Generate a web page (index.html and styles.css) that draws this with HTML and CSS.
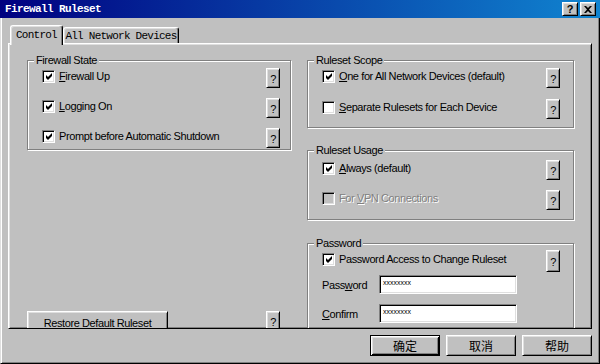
FILE: index.html
```html
<!DOCTYPE html>
<html>
<head>
  <meta charset="UTF-8">
  <link rel="stylesheet" href="styles.css">
</head>
<body>
  <div class="window">
    <div class="titlebar">
      <span class="title">Firewall Ruleset</span>
      <div class="caption-btns">
        <button class="cap-btn">?</button>
        <button class="cap-btn">
          <svg width="8" height="7" viewBox="0 0 8 7"><path d="M0 0h2l2 2 2-2h2L5 3.5 8 7H6L4 5 2 7H0l3-3.5z" fill="#000"/></svg>
        </button>
      </div>
    </div>

    <div class="client">
      <div class="tabs">
        <div class="tab active">Control</div>
        <div class="tab">All Network Devices</div>
      </div>

      <div class="panel">
        <div class="col col-left">
          <div class="group g-state">
            <div class="group-title">Firewall State</div>
            <div class="rows">
              <div class="row">
                <label class="check"><span class="cb"><svg viewBox="0 0 7 7"><path d="M0 2L2 4L6 0L6 3L2 7L0 5Z"/></svg></span><span><u>F</u>irewall Up</span></label>
                <button class="help">?</button>
              </div>
              <div class="row">
                <label class="check"><span class="cb"><svg viewBox="0 0 7 7"><path d="M0 2L2 4L6 0L6 3L2 7L0 5Z"/></svg></span><span><u>L</u>ogging On</span></label>
                <button class="help">?</button>
              </div>
              <div class="row">
                <label class="check"><span class="cb"><svg viewBox="0 0 7 7"><path d="M0 2L2 4L6 0L6 3L2 7L0 5Z"/></svg></span><span>Prompt before Automatic Shutdown</span></label>
                <button class="help">?</button>
              </div>
            </div>
          </div>

          <div class="restore-row">
            <button class="btn restore">Restore Default Ruleset</button>
            <button class="help">?</button>
          </div>
        </div>

        <div class="col col-right">
          <div class="group g-scope">
            <div class="group-title">Ruleset Scope</div>
            <div class="rows">
              <div class="row">
                <label class="check"><span class="cb"><svg viewBox="0 0 7 7"><path d="M0 2L2 4L6 0L6 3L2 7L0 5Z"/></svg></span><span><u>O</u>ne for All Network Devices (default)</span></label>
                <button class="help">?</button>
              </div>
              <div class="row">
                <label class="check"><span class="cb"></span><span><u>S</u>eparate Rulesets for Each Device</span></label>
                <button class="help">?</button>
              </div>
            </div>
          </div>

          <div class="group g-usage">
            <div class="group-title">Ruleset Usage</div>
            <div class="rows">
              <div class="row">
                <label class="check"><span class="cb"><svg viewBox="0 0 7 7"><path d="M0 2L2 4L6 0L6 3L2 7L0 5Z"/></svg></span><span><u>A</u>lways (default)</span></label>
                <button class="help">?</button>
              </div>
              <div class="row">
                <label class="check disabled"><span class="cb"></span><span>For <u>V</u>PN Connections</span></label>
                <button class="help">?</button>
              </div>
            </div>
          </div>

          <div class="group g-password">
            <div class="group-title">Password</div>
            <div class="row pw-row">
              <label class="check"><span class="cb"><svg viewBox="0 0 7 7"><path d="M0 2L2 4L6 0L6 3L2 7L0 5Z"/></svg></span><span>Password Access to Change Ruleset</span></label>
              <button class="help tall">?</button>
            </div>
            <div class="field first">
              <span class="field-label">Pass<u>w</u>ord</span>
              <span class="text-input">xxxxxxxx</span>
            </div>
            <div class="field">
              <span class="field-label"><u>C</u>onfirm</span>
              <span class="text-input">xxxxxxxx</span>
            </div>
          </div>
        </div>
      </div>

      <div class="actions">
        <button class="btn cjk default">确定</button>
        <button class="btn cjk">取消</button>
        <button class="btn cjk">帮助</button>
      </div>
    </div>
  </div>
</body>
</html>
```

FILE: styles.css
```css
body {
  margin: 0;
  width: 600px;
  height: 364px;
  overflow: hidden;
  background: #c0c0c0;
  color: #000;
  font-family: "Liberation Sans", Arial, sans-serif;
  font-size: 11px;
  letter-spacing: -0.4px;
}

button {
  font: inherit;
  letter-spacing: inherit;
  color: #000;
  background: #c0c0c0;
  padding: 0;
  margin: 0;
}

.window {
  display: flex;
  flex-direction: column;
  height: 364px;
}

/* title bar */
.titlebar {
  height: 18px;
  flex: none;
  display: flex;
  align-items: center;
  justify-content: space-between;
  padding: 0 4px 0 5px;
  background: linear-gradient(90deg, #000080 0%, #1084d0 100%);
  color: #fff;
}

.title {
  font-family: "Liberation Mono", monospace;
  font-weight: bold;
  font-size: 11px;
  letter-spacing: -0.6px;
}

.caption-btns {
  display: flex;
  gap: 2px;
}

.cap-btn {
  width: 16px;
  height: 14px;
  box-sizing: border-box;
  display: flex;
  align-items: center;
  justify-content: center;
  font-weight: bold;
  font-size: 11px;
  line-height: 1;
  border: 1px solid;
  border-color: #fff #000 #000 #fff;
  box-shadow: inset 1px 1px #dfdfdf, inset -1px -1px #808080;
}

/* client area */
.client {
  flex: 1;
  box-sizing: border-box;
  border: 1px solid;
  border-color: transparent #000 #000 #dfdfdf;
  border-top: none;
  box-shadow: inset 1px 0 #fff, inset -1px -1px #808080;
  padding: 7px 7px 0 7px;
}

.tabs {
  display: flex;
  align-items: flex-end;
  height: 18px;
  padding-left: 2px;
}

.tab {
  flex: none;
  height: 16px;
  box-sizing: border-box;
  display: flex;
  align-items: center;
  justify-content: center;
  width: 116px;
  white-space: nowrap;
  font-family: "Liberation Mono", monospace;
  font-size: 11px;
  letter-spacing: -0.75px;
  border: 1px solid;
  border-color: #fff #000 transparent #fff;
  border-bottom: none;
  border-radius: 3px 3px 0 0;
  box-shadow: inset -1px 0 #808080, inset 1px 1px #dfdfdf;
}

.tab.active {
  width: 53px;
  height: 20px;
  margin-bottom: -2px;
  padding-bottom: 2px;
  position: relative;
  z-index: 1;
  background: #c0c0c0;
}

.panel {
  height: 286px;
  box-sizing: border-box;
  border: 1px solid;
  border-color: #fff #000 #000 #fff;
  box-shadow: inset 1px 1px #dfdfdf, inset -1px -1px #808080;
  padding: 16px 17px 0 18px;
  display: flex;
  gap: 16px;
  overflow: hidden;
}

.col {
  display: flex;
  flex-direction: column;
}

.col-left {
  width: 264px;
}

.col-right {
  width: 267px;
}

/* group boxes */
.group {
  box-sizing: border-box;
  border: 1px solid #808080;
  box-shadow: inset 1px 1px #fff, 1px 1px #fff;
  padding: 0 10px 0 14px;
  display: flex;
  flex-direction: column;
  flex: none;
}

.col-right .group {
  padding-right: 13px;
}

.group-title {
  align-self: flex-start;
  margin: -7px 0 0 -8px;
  padding: 0 2px;
  line-height: 13px;
  background: #c0c0c0;
}

.rows {
  display: flex;
  flex-direction: column;
  gap: 10px;
  margin-top: 1px;
}

.g-state {
  height: 90px;
}

.g-scope {
  height: 68px;
}

.g-scope .rows {
  gap: 11px;
}

.g-usage {
  height: 70px;
  margin-top: 22px;
}

.g-usage .rows {
  margin-top: 3px;
}

.g-password {
  height: 120px;
  margin-top: 23px;
}

.row {
  display: flex;
  align-items: center;
  justify-content: space-between;
  height: 20px;
}

.check {
  display: flex;
  align-items: center;
  gap: 4px;
  padding-bottom: 4px;
}

.check.disabled {
  color: #808080;
  text-shadow: 1px 1px 0 #fff;
}

.cb {
  width: 13px;
  height: 13px;
  box-sizing: border-box;
  display: flex;
  align-items: center;
  justify-content: center;
  background: #fff;
  border: 1px solid;
  border-color: #808080 #fff #fff #808080;
  box-shadow: inset 1px 1px #000, inset -1px -1px #dfdfdf;
}

.cb svg {
  width: 7px;
  height: 7px;
  margin: 1px 0 0 1px;
  fill: #000;
}

.disabled .cb {
  background: #c0c0c0;
}

.help {
  width: 14px;
  height: 20px;
  box-sizing: border-box;
  border: 1px solid;
  border-color: #fff #000 #000 #fff;
  box-shadow: inset 1px 1px #dfdfdf, inset -1px -1px #808080;
  line-height: 1;
  padding-top: 2px;
}

.help.tall {
  height: 22px;
}

/* buttons */
.btn {
  box-sizing: border-box;
  border: 1px solid;
  border-color: #fff #000 #000 #fff;
  box-shadow: inset 1px 1px #dfdfdf, inset -1px -1px #808080;
}

.restore-row {
  display: flex;
  justify-content: space-between;
  align-items: flex-start;
  margin-top: 161px;
  padding-right: 11px;
}

.restore {
  width: 141px;
  height: 23px;
}

/* password fields */
.pw-row {
  height: 22px;
}

.field {
  display: flex;
  align-items: center;
  height: 19px;
  margin-top: 10px;
}

.field.first {
  margin-top: 3px;
}

.field-label {
  width: 57px;
}

.text-input {
  width: 138px;
  height: 19px;
  box-sizing: border-box;
  background: #fff;
  border: 1px solid;
  border-color: #808080 #fff #fff #808080;
  box-shadow: inset 1px 1px #000, inset -1px -1px #dfdfdf;
  font-size: 7px;
  letter-spacing: 0;
  line-height: 9px;
  padding: 2px 3px;
}

/* dialog buttons */
.actions {
  display: flex;
  justify-content: flex-end;
  gap: 6px;
  margin-top: 6px;
}

.cjk {
  width: 70px;
  height: 21px;
  font-family: "Noto Sans CJK SC", sans-serif;
  font-size: 12px;
  letter-spacing: 0;
  line-height: 1;
}

.btn.default {
  border: 1px solid #000;
  box-shadow: inset 1px 1px #fff, inset -1px -1px #000, inset 2px 2px #dfdfdf, inset -2px -2px #808080;
}
```
